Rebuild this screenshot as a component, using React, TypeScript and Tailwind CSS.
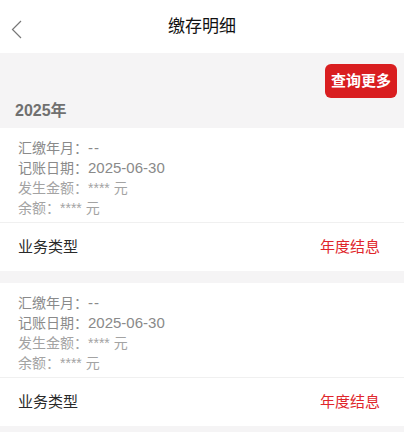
import React from "react";

const font = { fontFamily: '"Liberation Sans", "Noto Sans CJK SC", sans-serif' };

type Record = {
  month: string;
  date: string;
  amount: string;
  balance: string;
  type: string;
};

const records: Record[] = [
  { month: "--", date: "2025-06-30", amount: "**** 元", balance: "**** 元", type: "年度结息" },
  { month: "--", date: "2025-06-30", amount: "**** 元", balance: "**** 元", type: "年度结息" },
];

function RecordCard({ item }: { item: Record }) {
  return (
    <div className="bg-white">
      <div className="pl-[18px] pt-[10px] pb-[4px] text-[14px] leading-[20px]">
        <div className="text-[#8a8a8a]">
          汇缴年月：<span className="text-[15px] tracking-[1px]">{item.month}</span>
        </div>
        <div className="text-[#8a8a8a]">
          记账日期：<span className="text-[15px]">{item.date}</span>
        </div>
        <div className="text-[#a3a3a3]">发生金额：{item.amount}</div>
        <div className="text-[#a3a3a3]">余额：{item.balance}</div>
      </div>
      <div className="h-px bg-[#f0f0f0]" />
      <div className="flex h-[48px] items-center justify-between pl-[18px] pr-[24px] text-[15px]">
        <span className="text-[#2a2a2a]">业务类型</span>
        <span className="text-[#e0262b]">{item.type}</span>
      </div>
    </div>
  );
}

export default function App() {
  return (
    <div className="min-h-[432px] w-full bg-[#f5f4f5]" style={font}>
      {/* header */}
      <div className="relative flex h-[53px] items-center justify-center bg-white">
        <svg
          className="absolute left-[11px] top-[20px]"
          width="11"
          height="19"
          viewBox="0 0 11 19"
          fill="none"
        >
          <path d="M10 1L1.5 9.5L10 18" stroke="#777777" strokeWidth="1.2" />
        </svg>
        <span className="text-[17px] text-[#111111]">缴存明细</span>
      </div>

      {/* year bar */}
      <div className="flex h-[75px] flex-col">
        <div className="flex justify-end pr-[7px] pt-[11px]">
          <button className="flex h-[34px] w-[72px] items-center justify-center rounded-[6px] bg-[#d91e20] text-[15px] font-bold text-white">
            查询更多
          </button>
        </div>
        <div className="pl-[15px] pt-[3px] text-[16px] font-bold leading-[20px] text-[#707070]">
          2025年
        </div>
      </div>

      <div className="flex flex-col gap-[12px]">
        {records.map((r, i) => (
          <RecordCard key={i} item={r} />
        ))}
      </div>
    </div>
  );
}
